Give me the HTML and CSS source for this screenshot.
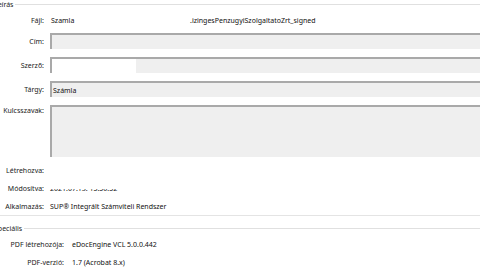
FILE: index.html
```html
<!DOCTYPE html>
<html lang="hu">
<head>
    <meta charset="UTF-8">
    <title>Dokumentum tulajdonságai</title>
    <link rel="stylesheet" href="styles.css">
</head>
<body>
    <div class="group group-desc">
        <div class="legend"><span>Leírás</span></div>

        <div class="row row-file">
            <div class="label">Fájl:</div>
            <div class="value">
                <span class="file-name">Szamla</span><span>.izingesPenzugyiSzolgaltatoZrt_signed</span>
            </div>
        </div>
        <div class="row row-field">
            <div class="label">Cím:</div>
            <div class="field"></div>
        </div>
        <div class="row row-field">
            <div class="label">Szerző:</div>
            <div class="field"><span class="blank"></span></div>
        </div>
        <div class="row row-field">
            <div class="label">Tárgy:</div>
            <div class="field">Számla</div>
        </div>
        <div class="row row-area">
            <div class="label">Kulcsszavak:</div>
            <div class="field field-area"></div>
        </div>
        <div class="row row-text row-first">
            <div class="label">Létrehozva:</div>
            <div class="value"></div>
        </div>
        <div class="row row-text">
            <div class="label">Módosítva:</div>
            <div class="value"><span class="masked">2021.07.13. 15:50:52</span></div>
        </div>
        <div class="row row-text">
            <div class="label">Alkalmazás:</div>
            <div class="value">SUP® Integrált Számviteli Rendszer</div>
        </div>
    </div>

    <div class="group group-special">
        <div class="legend"><span>Speciális</span></div>

        <div class="row row-text">
            <div class="label">PDF létrehozója:</div>
            <div class="value">eDocEngine VCL 5.0.0.442</div>
        </div>
        <div class="row row-text">
            <div class="label">PDF-verzió:</div>
            <div class="value">1.7 (Acrobat 8.x)</div>
        </div>
    </div>
</body>
</html>
```

FILE: styles.css
```css
body {
    margin: 0;
    background: #ffffff;
    font-family: "Noto Sans", "Open Sans", sans-serif;
    font-size: 7px;
    color: #111;
    overflow: hidden;
}

.group {
    display: flex;
    flex-direction: column;
    margin-left: -6px;
}

.group-desc {
    border-bottom: 1px solid #e4e4e4;
}

.group-special {
    margin-top: 6px;
}

/* legend text followed by the group line */
.legend {
    display: flex;
    align-items: center;
    height: 8px;
    color: #222;
}

.legend::after {
    content: "";
    flex: 1;
    height: 1px;
    background: #e0e0e0;
    margin-left: 2px;
}

.group-special .legend {
    height: 13px;
}

.row {
    display: flex;
    align-items: center;
}

.label {
    flex: 0 0 56px;
    text-align: right;
    color: #222;
    padding-right: 6px;
    box-sizing: border-box;
}

.group-special .label {
    flex-basis: 78px;
    padding-right: 8px;
}

.value {
    flex: 1;
    white-space: nowrap;
}

.row-file {
    height: 16px;
    margin-top: 4px;
}

.row-file .value {
    padding-left: 1px;
}

.file-name {
    display: inline-block;
    width: 139px;
}

.row-field {
    height: 16px;
    margin-top: 5px;
}

.row-field + .row-field,
.row-field + .row-area {
    margin-top: 8px;
}

.row-area {
    align-items: flex-start;
    height: 50px;
}

.row-area .label {
    padding-top: 1px;
}

.field {
    flex: 1;
    align-self: stretch;
    background: #efefef;
    border-top: 2px solid #a9a9a9;
    border-left: 2px solid #a9a9a9;
    padding: 0 3px 0 1px;
    line-height: 13px;
    display: flex;
    align-items: center;
}

.field-area {
    height: 50px;
}

.blank {
    display: block;
    width: 84px;
    height: 14px;
    margin-left: -1px;
    background: #ffffff;
}

.row-text {
    height: 18px;
}

.row-first {
    margin-top: 6px;
}

/* only the lower part of the value shows through */
.masked {
    position: relative;
    display: inline-block;
}

.masked::before {
    content: "";
    position: absolute;
    left: -2px;
    right: -2px;
    top: -2px;
    height: 7px;
    background: #ffffff;
}
```
